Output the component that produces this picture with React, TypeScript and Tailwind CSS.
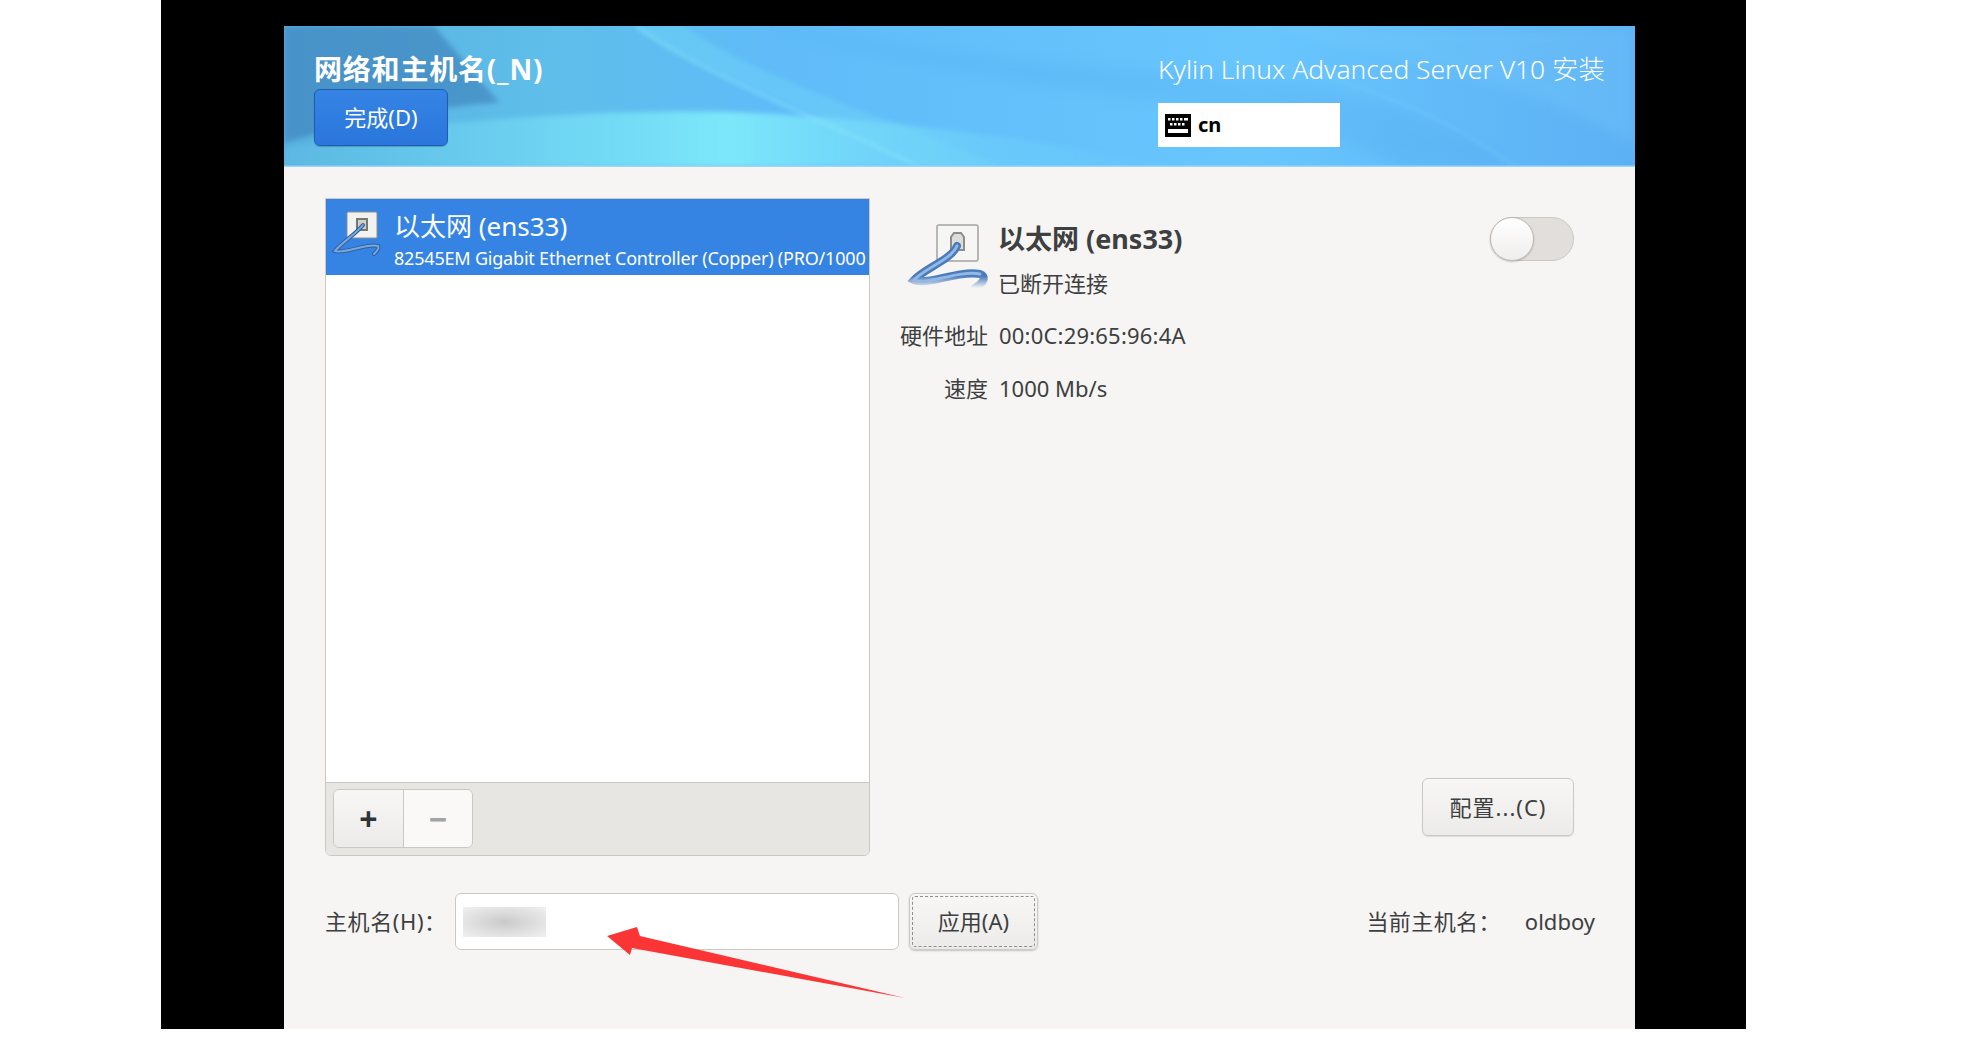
import React from "react";

const font = "font-['Noto_Sans','Noto_Sans_CJK_SC',sans-serif]";

const HeaderArt = () => (
  <svg className="absolute inset-0 w-full h-full" viewBox="0 0 1351 140" preserveAspectRatio="none">
    <defs>
      <linearGradient id="base" x1="0" x2="1" y1="0" y2="0">
        <stop offset="0" stopColor="#58b0de" />
        <stop offset="0.2" stopColor="#5fbeea" />
        <stop offset="0.36" stopColor="#60bbf8" />
        <stop offset="0.72" stopColor="#68c6fd" />
        <stop offset="1" stopColor="#5cb0f4" />
      </linearGradient>
      <linearGradient id="glow" x1="0" x2="1" y1="0" y2="0">
        <stop offset="0" stopColor="#6ad0f0" stopOpacity="0.25" />
        <stop offset="0.5" stopColor="#7eeafa" stopOpacity="0.95" />
        <stop offset="0.8" stopColor="#70d4fa" stopOpacity="0.45" />
        <stop offset="1" stopColor="#70d4fa" stopOpacity="0" />
      </linearGradient>
      <filter id="soft"><feGaussianBlur stdDeviation="2.5" /></filter>
      <filter id="softer"><feGaussianBlur stdDeviation="7" /></filter>
      <filter id="thin"><feGaussianBlur stdDeviation="2" /></filter>
    </defs>
    <rect width="1351" height="140" fill="url(#base)" />
    <path d="M0 0 H150 L215 76 C150 80 70 95 0 116 Z" fill="#3d7fba" opacity="0.6" filter="url(#soft)" />
    <path d="M0 122 C120 96 280 84 430 85 C560 88 750 110 890 140 H0 Z" fill="url(#glow)" filter="url(#soft)" />
    <path d="M352 0 C420 45 530 85 640 140 H720 C600 90 470 50 400 0 Z" fill="#72d8f8" opacity="0.4" filter="url(#soft)" />
    <path d="M352 0 C420 48 520 85 636 140" fill="none" stroke="#8ce8fb" strokeWidth="4" opacity="0.45" filter="url(#thin)" />
    <path d="M480 0 C640 25 780 40 930 48 C1070 58 1170 95 1232 140 H1120 C1020 95 900 76 760 60 C660 42 560 24 480 0 Z" fill="#4fa6ea" opacity="0.22" filter="url(#softer)" />
    <path d="M1000 40 C1090 60 1170 95 1232 140" fill="none" stroke="#86d8fc" strokeWidth="2" opacity="0.3" filter="url(#thin)" />
    <path d="M950 0 C1100 20 1280 70 1351 120 V0 Z" fill="#7cd0fb" opacity="0.25" filter="url(#softer)" />
    <rect y="138.5" width="1351" height="2" fill="#9ad7f5" />
  </svg>
);

const EthernetIcon = ({ small }: { small?: boolean }) =>
  small ? (
    <svg width="56" height="60" viewBox="0 0 56 60" className="shrink-0">
      <rect x="15" y="2" width="30" height="26" rx="1" fill="#f2f2f0" stroke="#8f8f8c" />
      <path d="M25 9h10v11H25z" fill="#cfcfcc" stroke="#77776f" strokeWidth="2" />
      <path d="M31 15 C24 24 8 34 3 41 C14 44 34 33 46 36 C48 38 44 42 42 44" fill="none" stroke="#2a62a8" strokeWidth="4" strokeLinecap="round" />
      <path d="M31 15 C24 24 8 34 3 41 C14 44 34 33 46 36 C48 38 44 42 42 44" fill="none" stroke="#7ea5d6" strokeWidth="2" strokeLinecap="round" />
    </svg>
  ) : (
    <svg width="84" height="70" viewBox="0 0 84 70" className="shrink-0">
      <defs>
        <linearGradient id="tail" x1="0" x2="0" y1="0" y2="1">
          <stop offset="0.72" stopColor="#4a7cbd" />
          <stop offset="1" stopColor="#4a7cbd" stopOpacity="0" />
        </linearGradient>
      </defs>
      <rect x="30" y="3" width="41" height="36" rx="2" fill="#f6f6f4" stroke="#a3a3a0" strokeWidth="1.5" />
      <path d="M44 15l3-4h7l3 4v13H44z" fill="#ddddda" stroke="#8c8c88" strokeWidth="2" />
      <path d="M50 24 C44 38 18 46 7 58 C20 64 50 48 73 52 C79 54 78 60 68 66" fill="none" stroke="url(#tail)" strokeWidth="8" strokeLinecap="round" />
      <path d="M50 24 C44 38 18 46 7 58 C20 64 50 48 73 52" fill="none" stroke="#94b8e4" strokeWidth="3" strokeLinecap="round" />
    </svg>
  );

export default function App() {
  return (
    <div className={`relative h-[1047px] bg-white overflow-hidden ${font}`}>
      <div className="ml-[161px] w-[1585px] h-[1029px] bg-black pl-[123px] pr-[111px] pt-[26px]">
        <div className="h-[1003px] flex flex-col bg-[#f6f5f4] text-[#3d3f40]">
          <header className="relative h-[141px] shrink-0 overflow-hidden px-[30px] text-white flex justify-between">
            <HeaderArt />
            <div className="relative flex flex-col">
              <h1 className="text-[28px] leading-[36px] font-bold tracking-[0.8px] mt-[25px] whitespace-nowrap">网络和主机名(_N)</h1>
              <button className="mt-[2px] w-[134px] h-[57px] rounded-[6px] border border-[#1c5db4] bg-gradient-to-b from-[#3584e4] to-[#2a76dc] text-[22px] shadow-[0_1px_1px_rgba(0,0,0,0.2)]">
                完成(D)
              </button>
            </div>
            <div className="relative w-[447px] flex flex-col">
              <div className="text-[26.4px] leading-[36px] mt-[25px] whitespace-nowrap font-light">Kylin Linux Advanced Server V10 安装</div>
              <div className="mt-[16px] w-[182px] h-[44px] bg-white flex items-center pl-[7px] gap-[7px] text-black text-[20px] font-bold">
                <svg width="26" height="24" viewBox="0 0 26 24">
                  <path d="M0 1h26v23H0z" fill="#000" />
                  <path d="M3 5h2.5v2.5H3zM7 5h2.5v2.5H7zM11 5h2.5v2.5H11zM15 5h2.5v2.5H15zM19 5h4v2.5h-4zM5 10h2.5v2.5H5zM9 10h2.5v2.5H9zM13 10h2.5v2.5H13zM17 10h2.5v2.5H17zM3 16h20v4H3z" fill="#fff" />
                </svg>
                cn
              </div>
            </div>
          </header>

          <main className="flex-1 flex flex-col pl-[41px] pr-[40px] pt-[31px]">
            <div className="flex h-[658px]">
              <section className="w-[545px] flex flex-col border border-[#cdc7c2] rounded-b-[6px] overflow-hidden">
                <div className="flex-1 bg-white">
                  <div className="h-[76px] bg-[#3584e4] text-white flex pl-[6px] pt-[11px] gap-[1px] overflow-hidden">
                    <EthernetIcon small />
                    <div className="min-w-0 whitespace-nowrap pl-[5px]">
                      <div className="text-[26px] leading-[32px]">以太网 (ens33)</div>
                      <div className="text-[18px] leading-[26px] mt-[3px] tracking-[-0.2px]">82545EM Gigabit Ethernet Controller (Copper) (PRO/1000</div>
                    </div>
                  </div>
                </div>
                <div className="h-[73px] border-t border-[#cdc7c2] bg-[#e8e6e3] pl-[7px] pt-[6px]">
                  <div className="flex w-[140px] h-[59px] rounded-[6px] border border-[#cdc7c2] overflow-hidden text-[32px] leading-none">
                    <button className="w-[70px] border-r border-[#cdc7c2] bg-gradient-to-b from-[#f8f7f6] to-[#edebe9] font-bold text-[#2e3436]">+</button>
                    <button className="flex-1 bg-[#faf9f8] font-bold text-[#a2a4a5]">−</button>
                  </div>
                </div>
              </section>

              <section className="flex-1 relative pl-[28px] flex flex-col">
                <div className="flex justify-between items-start pr-[21px]">
                  <div className="flex mt-[21px]">
                    <div className="w-[86px] ml-[9px] mr-[5px] mt-[3px]"><EthernetIcon /></div>
                    <div>
                      <div className="text-[27px] leading-[40px] font-bold">以太网 (ens33)</div>
                      <div className="text-[22px] leading-[30px] mt-[9px]">已断开连接</div>
                    </div>
                  </div>
                  <div className="mt-[19px] w-[84px] h-[44px] rounded-full bg-[#e1dedb] border border-[#cdc7c2] relative">
                    <div className="absolute -left-px -top-px w-[44px] h-[44px] rounded-full bg-gradient-to-b from-white to-[#f0eeec] border border-[#bfb8b1] shadow-[0_1px_2px_rgba(0,0,0,0.2)]" />
                  </div>
                </div>
                <div className="grid grid-cols-[90px_1fr] gap-x-[11px] gap-y-[23px] text-[22px] leading-[30px] mt-[22px] w-[400px]">
                  <span className="text-right whitespace-nowrap">硬件地址</span>
                  <span className="tracking-[0.2px]">00:0C:29:65:96:4A</span>
                  <span className="text-right">速度</span>
                  <span>1000 Mb/s</span>
                </div>
                <div className="mt-auto self-end mr-[21px] mb-[20px]">
                  <button className="w-[152px] h-[58px] rounded-[6px] border border-[#cdc7c2] bg-gradient-to-b from-[#f8f7f6] to-[#edebe9] text-[22px] tracking-[1px] shadow-[0_1px_1px_rgba(0,0,0,0.1)]">
                    配置...(C)
                  </button>
                </div>
              </section>
            </div>

            <div className="flex items-center mt-[37px] h-[57px] text-[22px]">
              <label className="w-[130px] whitespace-nowrap tracking-[0.6px]">主机名(H)：</label>
              <div className="w-[444px] h-[57px] rounded-[6px] border border-[#cdc7c2] bg-white pl-[7px] flex items-center">
                <div className="w-[83px] h-[30px] bg-[radial-gradient(ellipse_at_center,#c9c9c9_0%,#dcdcdc_45%,#f0f0f0_100%)]" />
              </div>
              <button className="ml-[10px] w-[129px] h-[57px] rounded-[6px] border border-[#cdc7c2] bg-gradient-to-b from-[#f8f7f6] to-[#edebe9] p-[2px] shadow-[0_1px_2px_rgba(0,0,0,0.2)]">
                <span className="flex items-center justify-center h-full rounded-[3px] border border-dashed border-[#8f8f8c]">应用(A)</span>
              </button>
              <div className="ml-auto flex gap-[24px] whitespace-nowrap">
                <span className="tracking-[0.4px]">当前主机名：</span>
                <span>oldboy</span>
              </div>
            </div>
          </main>
        </div>
      </div>

      <svg className="absolute left-0 top-0 pointer-events-none" width="1979" height="1047" viewBox="0 0 1979 1047">
        <path d="M607 936 L637 927 L640 936 L905 998 L632 948 L630 955 Z" fill="#fb3535" />
      </svg>
    </div>
  );
}
